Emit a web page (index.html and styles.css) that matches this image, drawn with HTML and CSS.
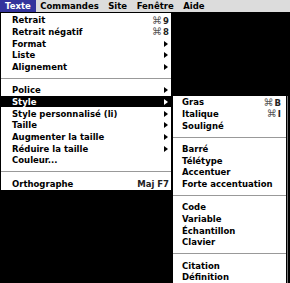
FILE: index.html
```
<!DOCTYPE html>
<html lang="fr">
<head>
  <meta charset="UTF-8">
  <title>Menu Texte</title>
  <link rel="stylesheet" href="styles.css">
</head>
<body>
  <!-- Menu bar -->
  <div class="menubar">
    <span class="title active">Texte</span>
    <span class="title">Commandes</span>
    <span class="title">Site</span>
    <span class="title">Fenêtre</span>
    <span class="title">Aide</span>
  </div>

  <div class="menus">
    <!-- Texte menu -->
    <ul class="menu main">
      <li class="item"><span>Retrait</span><span class="key"><span class="cmd">⌘</span>9</span></li>
      <li class="item"><span>Retrait négatif</span><span class="key"><span class="cmd">⌘</span>8</span></li>
      <li class="item"><span>Format</span><span class="arrow"></span></li>
      <li class="item"><span>Liste</span><span class="arrow"></span></li>
      <li class="item"><span>Alignement</span><span class="arrow"></span></li>
      <li class="sep"></li>
      <li class="item"><span>Police</span><span class="arrow"></span></li>
      <li class="item selected"><span>Style</span><span class="arrow"></span></li>
      <li class="item"><span>Style personnalisé (li)</span><span class="arrow"></span></li>
      <li class="item"><span>Taille</span><span class="arrow"></span></li>
      <li class="item"><span>Augmenter la taille</span><span class="arrow"></span></li>
      <li class="item"><span>Réduire la taille</span><span class="arrow"></span></li>
      <li class="item"><span>Couleur...</span></li>
      <li class="sep"></li>
      <li class="item"><span>Orthographe</span><span class="key">Maj F7</span></li>
    </ul>

    <!-- Style submenu -->
    <ul class="menu sub">
      <li class="item"><span>Gras</span><span class="key"><span class="cmd">⌘</span>B</span></li>
      <li class="item"><span>Italique</span><span class="key"><span class="cmd">⌘</span>I</span></li>
      <li class="item"><span>Souligné</span></li>
      <li class="sep"></li>
      <li class="item"><span>Barré</span></li>
      <li class="item"><span>Télétype</span></li>
      <li class="item"><span>Accentuer</span></li>
      <li class="item"><span>Forte accentuation</span></li>
      <li class="sep"></li>
      <li class="item"><span>Code</span></li>
      <li class="item"><span>Variable</span></li>
      <li class="item"><span>Échantillon</span></li>
      <li class="item"><span>Clavier</span></li>
      <li class="sep"></li>
      <li class="item"><span>Citation</span></li>
      <li class="item"><span>Définition</span></li>
    </ul>
  </div>
</body>
</html>
```

FILE: styles.css
```
/* Reset */
* {
  margin: 0;
  padding: 0;
  box-sizing: border-box;
}

body {
  font-family: "DejaVu Sans", "Liberation Sans", sans-serif;
  font-size: 8.5px;
  font-weight: bold;
  color: #000;
  background: #000;
  overflow: hidden;
}

/* Menu bar */
.menubar {
  display: flex;
  height: 13px;
  background: #dcdcdc;
  border-bottom: 1px solid #000;
}

.title {
  padding: 0 5px;
  line-height: 12px;
}

.title + .title {
  margin-left: -0.5px;
}

.title.active {
  background: #33339c;
  color: #fff;
}

/* Menus */
.menus {
  display: flex;
  align-items: flex-start;
}

.menu {
  list-style: none;
  background: #fff;
  border: 1px solid #000;
}

.menu.main {
  width: 172px;
  border-top: none;
  padding: 1px 0 1px;
}

.menu.sub {
  width: 115px;
  margin-top: 82px;
  box-shadow: 1px 1px 0 #777;
}

.item {
  height: 11.67px;
  display: flex;
  align-items: center;
  justify-content: space-between;
  padding: 1px 2px 0 11px;
  white-space: nowrap;
}

.sub .item {
  padding: 1px 5px 0 9px;
}

.item.selected {
  background: #000;
  color: #fff;
}

.key {
  color: #222;
}

.cmd {
  font-size: 10px;
  font-weight: normal;
  color: #555;
  margin-right: 1px;
}

.arrow {
  width: 0;
  height: 0;
  border-left: 4px solid currentColor;
  border-top: 3.5px solid transparent;
  border-bottom: 3.5px solid transparent;
  margin-right: 1px;
}

.sep {
  height: 11.67px;
  display: flex;
  align-items: center;
  padding-top: 1px;
}

.sep::after {
  content: "";
  flex: 1;
  height: 1px;
  background: #999;
}
```
